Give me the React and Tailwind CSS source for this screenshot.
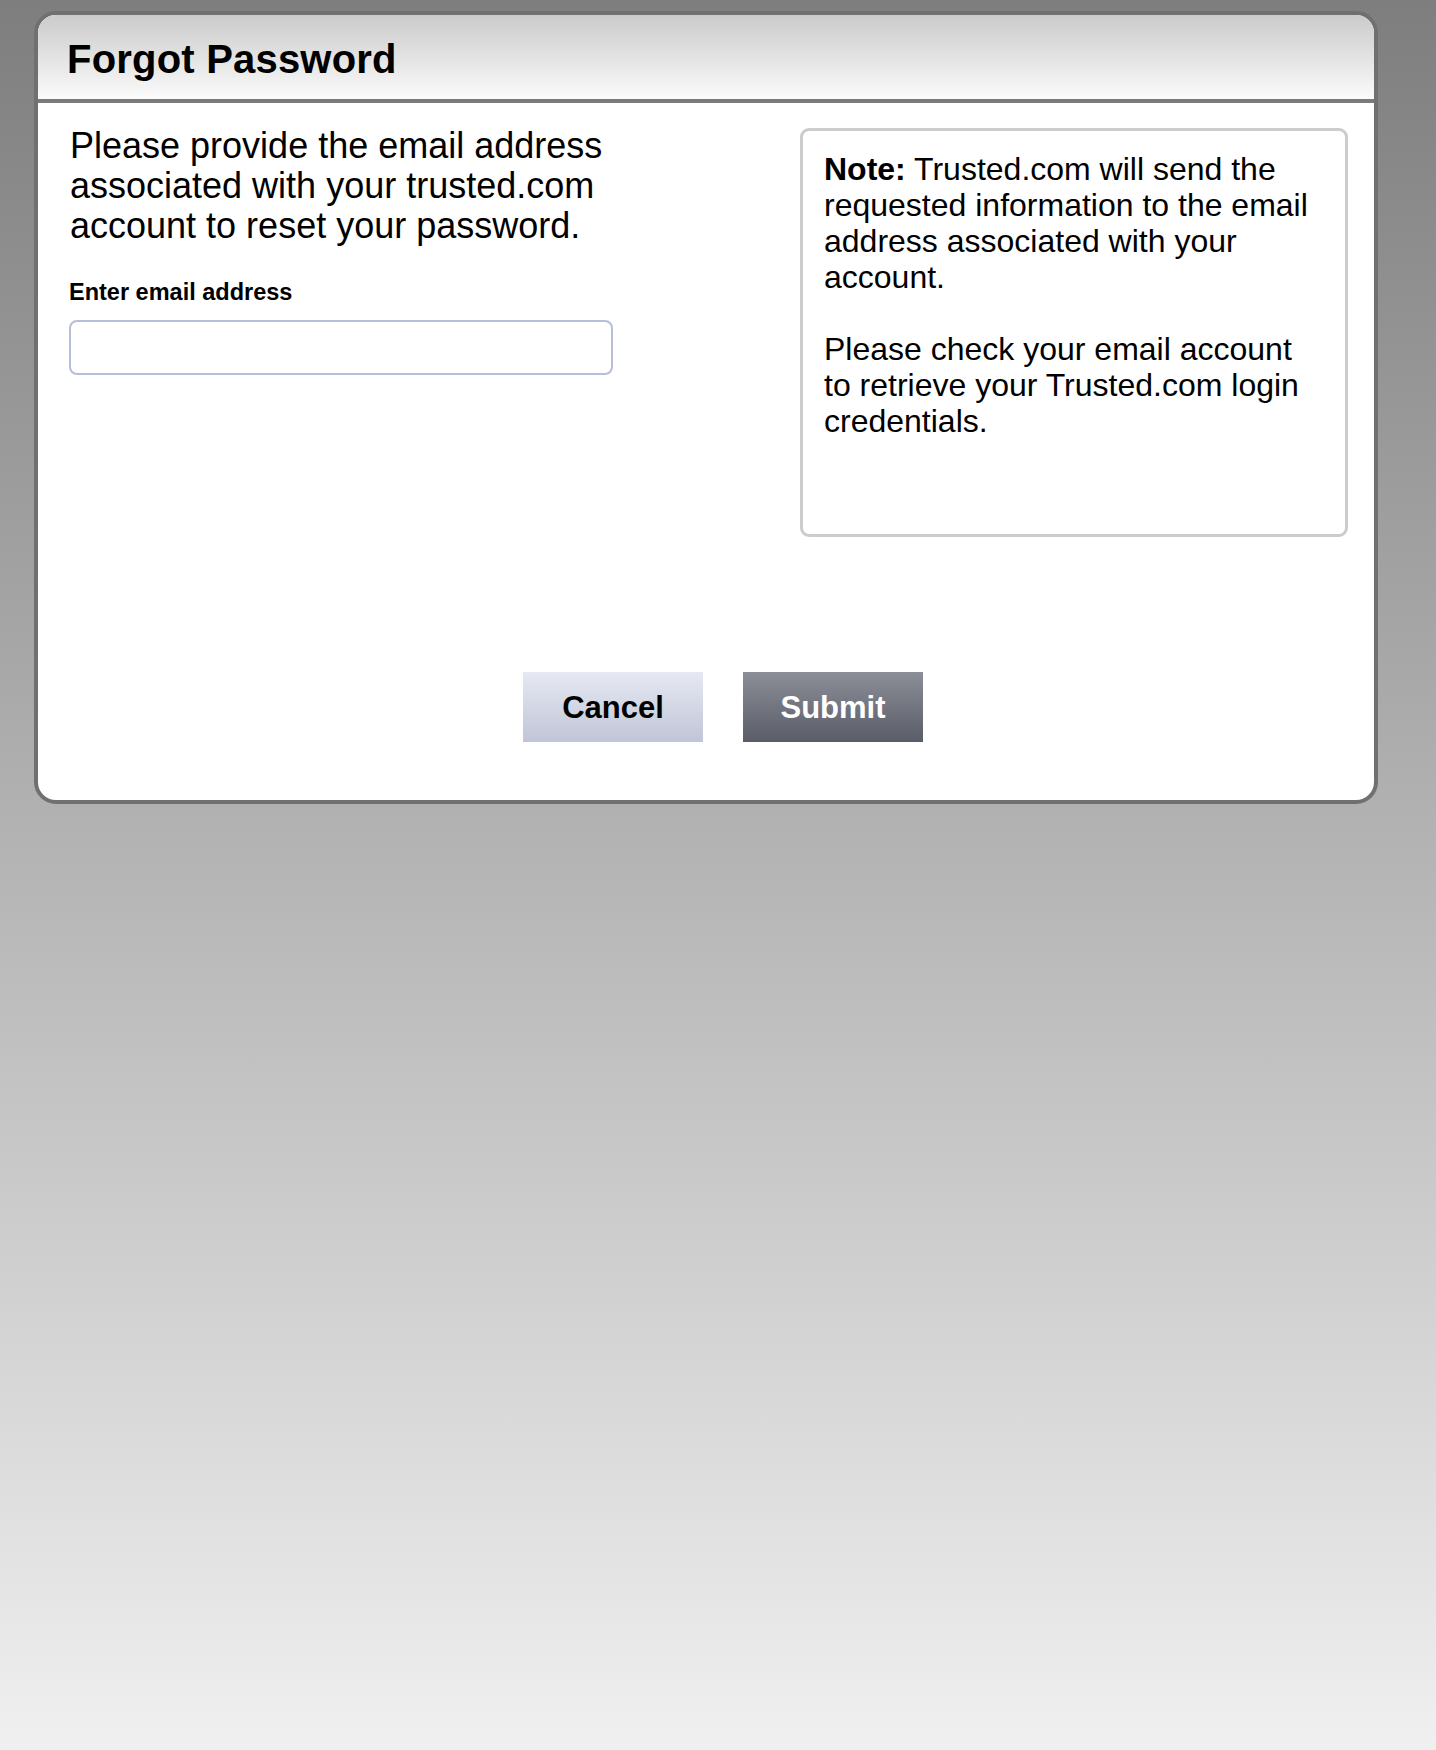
export default function App() {
  const font = { fontFamily: '"Liberation Sans", Arial, Helvetica, sans-serif' };
  return (
    <div
      className="min-h-[1750px] w-full bg-gradient-to-b from-[#7e7e7e] to-[#f0f0f0] pt-[11px] pl-[34px]"
      style={font}
    >
      <div className="w-[1344px] border-[4px] border-[#707070] rounded-[22px] bg-white overflow-hidden text-black">
        {/* Header */}
        <div className="h-[88px] border-b-[4px] border-[#7a7a7a] bg-gradient-to-b from-[#cbcbcb] to-[#fbfbfb] pl-[29px] pt-[24px]">
          <h1 className="text-[40px] leading-none font-bold tracking-[0.2px]">Forgot Password</h1>
        </div>

        {/* Body */}
        <div className="pt-[23px] pb-[58px]">
          <div className="flex items-start pl-[32px] pr-[26px]">
            <div className="flex-1">
              <p className="text-[36px] leading-[40px] whitespace-nowrap">
                Please provide the email address
                <br />
                associated with your trusted.com
                <br />
                account to reset your password.
              </p>
              <label className="block mt-[34px] -ml-[1px] text-[23.5px] leading-[24px] font-bold">
                Enter email address
              </label>
              <input
                type="email"
                className="block mt-[16px] -ml-[1px] w-[544px] h-[55px] rounded-[8px] border-2 border-[#b8bdd9] bg-white outline-none px-3 text-[24px]"
              />
            </div>
            <div className="mt-[2px] w-[548px] h-[409px] shrink-0 rounded-[9px] border-[3px] border-[#cccccc] pl-[21px] pt-[20px]">
              <p className="text-[32px] leading-[36px] whitespace-nowrap">
                <span className="font-bold">Note:</span> Trusted.com will send the
                <br />
                requested information to the email
                <br />
                address associated with your
                <br />
                account.
                <br />
                <br />
                Please check your email account
                <br />
                to retrieve your Trusted.com login
                <br />
                credentials.
              </p>
            </div>
          </div>

          <div className="mt-[135px] flex justify-center gap-[40px] pl-[34px]">
            <button className="w-[180px] h-[70px] flex items-center justify-center bg-gradient-to-b from-[#e6e9f2] to-[#c0c5d8] text-[31px] leading-none font-bold text-black">
              Cancel
            </button>
            <button className="w-[180px] h-[70px] flex items-center justify-center bg-gradient-to-b from-[#8c8e98] to-[#5a5c67] text-[31px] leading-none font-bold text-white">
              Submit
            </button>
          </div>
        </div>
      </div>
    </div>
  );
}
